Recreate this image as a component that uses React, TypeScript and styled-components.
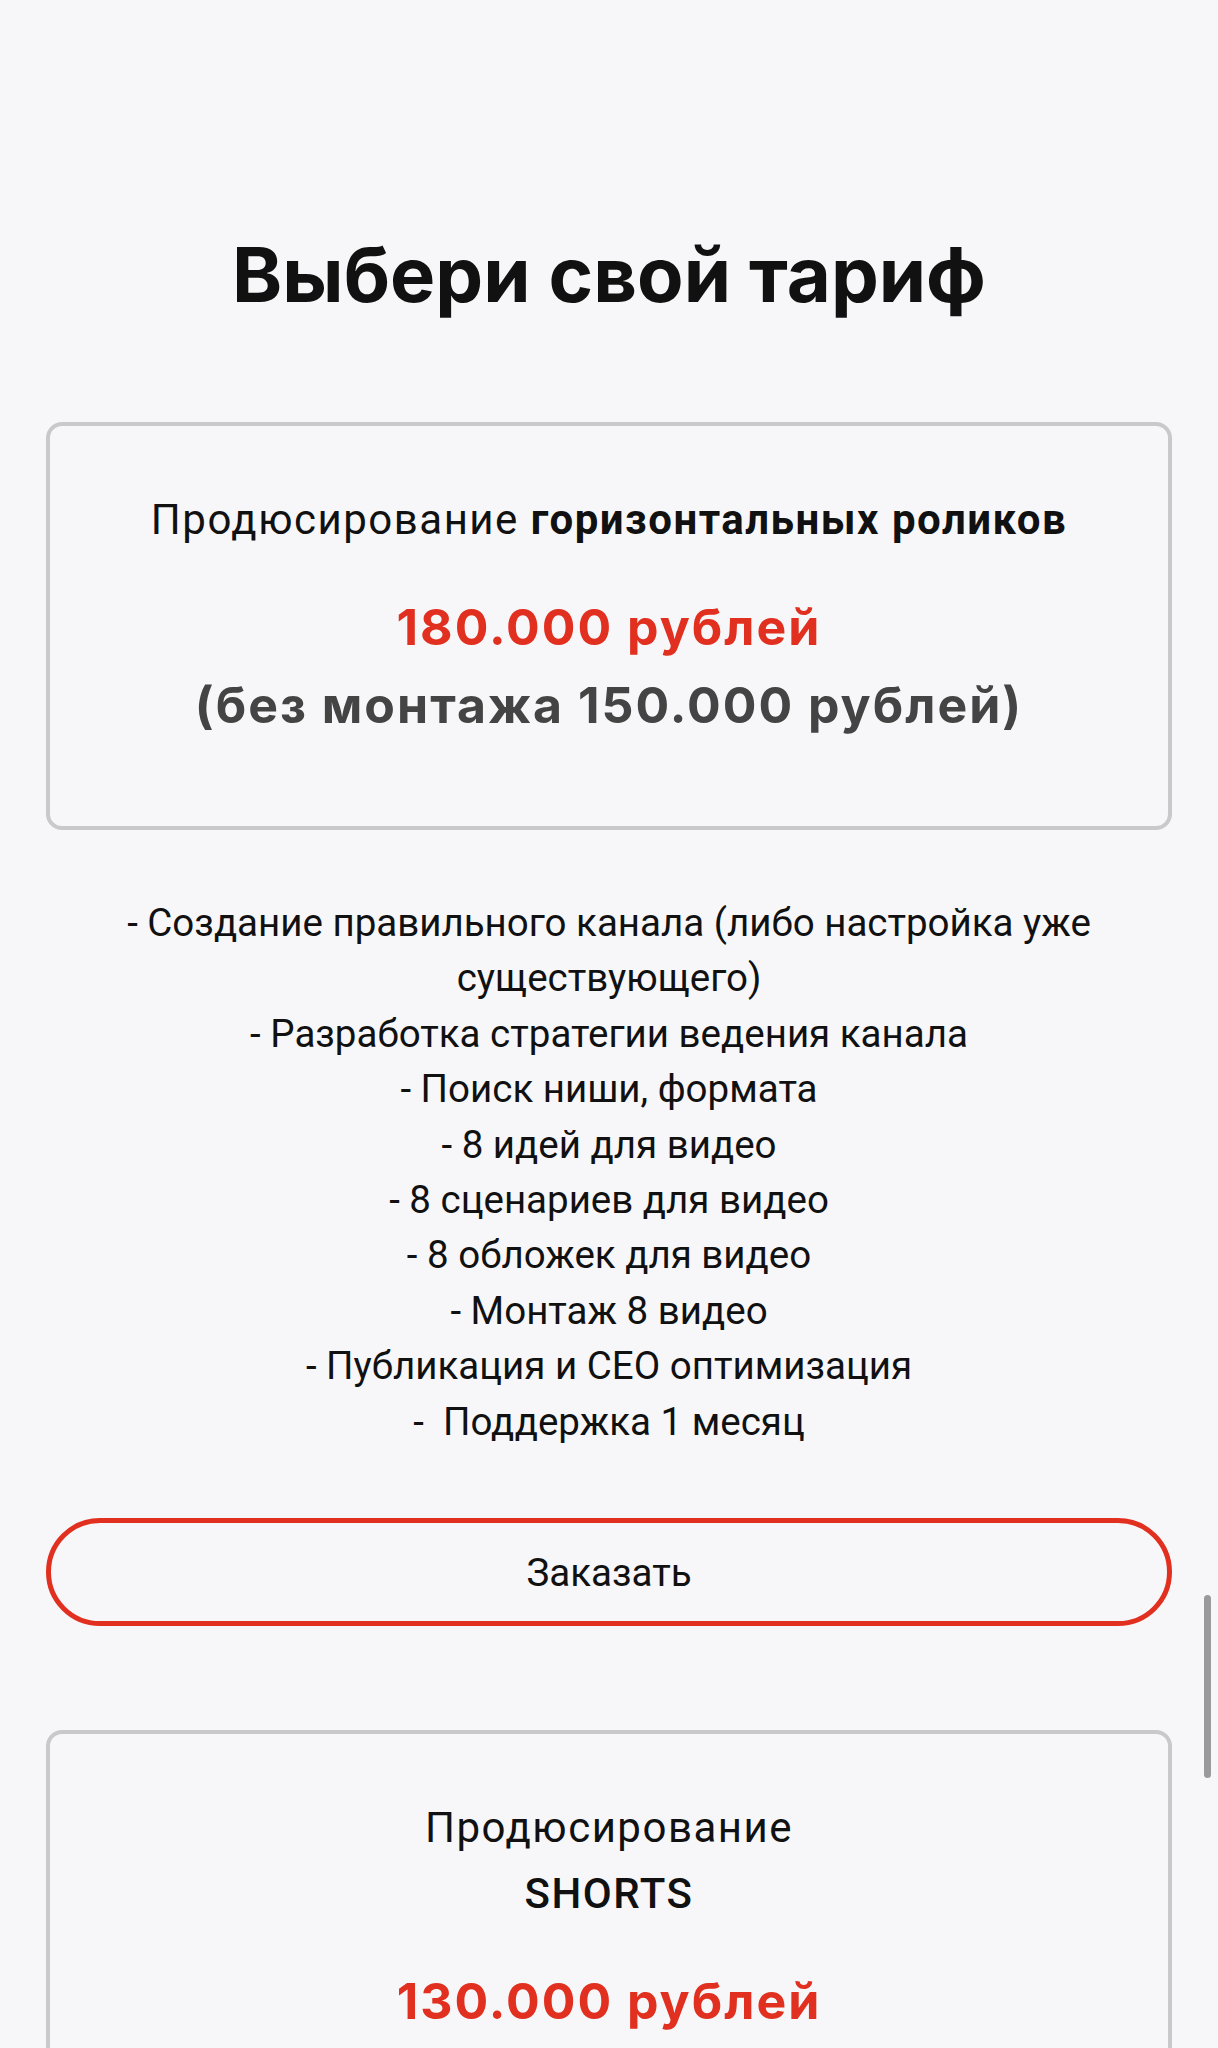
import React from 'react';
import styled, { createGlobalStyle } from 'styled-components';

const GlobalStyle = createGlobalStyle`
    html, body {
        margin: 0;
        padding: 0;
        background: #f7f7f9;
    }

    body {
        font-family: Roboto, 'Noto Sans', sans-serif;
        color: #111;
        overflow: hidden;
    }
`;

const Page = styled.main`
    padding: 0 46px;
    min-height: 2048px;
    box-sizing: border-box;
`;

const Heading = styled.h1`
    margin: 0;
    padding-top: 228px;
    font-family: Inter, 'Open Sans', sans-serif;
    font-weight: 700;
    font-size: 76px;
    line-height: 92px;
    letter-spacing: 0;
    text-align: center;
    color: #111;
    margin-bottom: 102px;
`;

const TariffCard = styled.section`
    border: 4px solid #c9c9cb;
    border-radius: 16px;
    padding: 61px 20px 82px;
    text-align: center;
`;

const CardTitle = styled.div`
    font-size: 42px;
    line-height: 66px;
    letter-spacing: 1.5px;
    color: #111;

    b {
        font-weight: 700;
    }
`;

const ShortsLabel = styled.span`
    display: block;
    font-weight: 500;
`;

const PriceBlock = styled.div`
    margin-top: 35px;
    font-family: Inter, 'Open Sans', sans-serif;
    font-weight: 700;
    font-size: 50px;
    line-height: 78px;
    letter-spacing: 2px;
`;

const Price = styled.span<{ $accent?: boolean }>`
    display: block;
    color: ${(p) => (p.$accent ? '#e1301f' : '#444')};
`;

const Features = styled.ul`
    list-style: none;
    margin: 65px 0 0;
    padding: 0;
    text-align: center;
    font-size: 38.5px;
    line-height: 55.4px;
    color: #111;
`;

const Feature = styled.li`
    white-space: pre;
`;

const OrderButton = styled.button`
    display: block;
    width: 100%;
    height: 108px;
    margin: 69px 0 104px;
    border: 5px solid #e1301f;
    border-radius: 60px;
    background: transparent;
    font-family: Roboto, sans-serif;
    font-size: 38.5px;
    color: #111;
    cursor: pointer;
`;

const ScrollThumb = styled.div`
    position: fixed;
    right: 7px;
    top: 1595px;
    width: 7px;
    height: 183px;
    border-radius: 4px;
    background: #9a9a9c;
`;

const features = [
    '- Создание правильного канала (либо настройка уже',
    'существующего)',
    '- Разработка стратегии ведения канала',
    '- Поиск ниши, формата',
    '- 8 идей для видео',
    '- 8 сценариев для видео',
    '- 8 обложек для видео',
    '- Монтаж 8 видео',
    '- Публикация и СЕО оптимизация',
    '-  Поддержка 1 месяц',
];

export default function App() {
    return (
        <>
            <GlobalStyle />
            <Page>
                <Heading>Выбери свой тариф</Heading>

                <TariffCard>
                    <CardTitle>
                        Продюсирование <b>горизонтальных роликов</b>
                    </CardTitle>
                    <PriceBlock>
                        <Price $accent>180.000 рублей</Price>
                        <Price>(без монтажа 150.000 рублей)</Price>
                    </PriceBlock>
                </TariffCard>

                <Features>
                    {features.map((line) => (
                        <Feature key={line}>{line}</Feature>
                    ))}
                </Features>

                <OrderButton>Заказать</OrderButton>

                <TariffCard>
                    <CardTitle>
                        Продюсирование
                        <ShortsLabel>SHORTS</ShortsLabel>
                    </CardTitle>
                    <PriceBlock>
                        <Price $accent>130.000 рублей</Price>
                    </PriceBlock>
                </TariffCard>
            </Page>
            <ScrollThumb />
        </>
    );
}
